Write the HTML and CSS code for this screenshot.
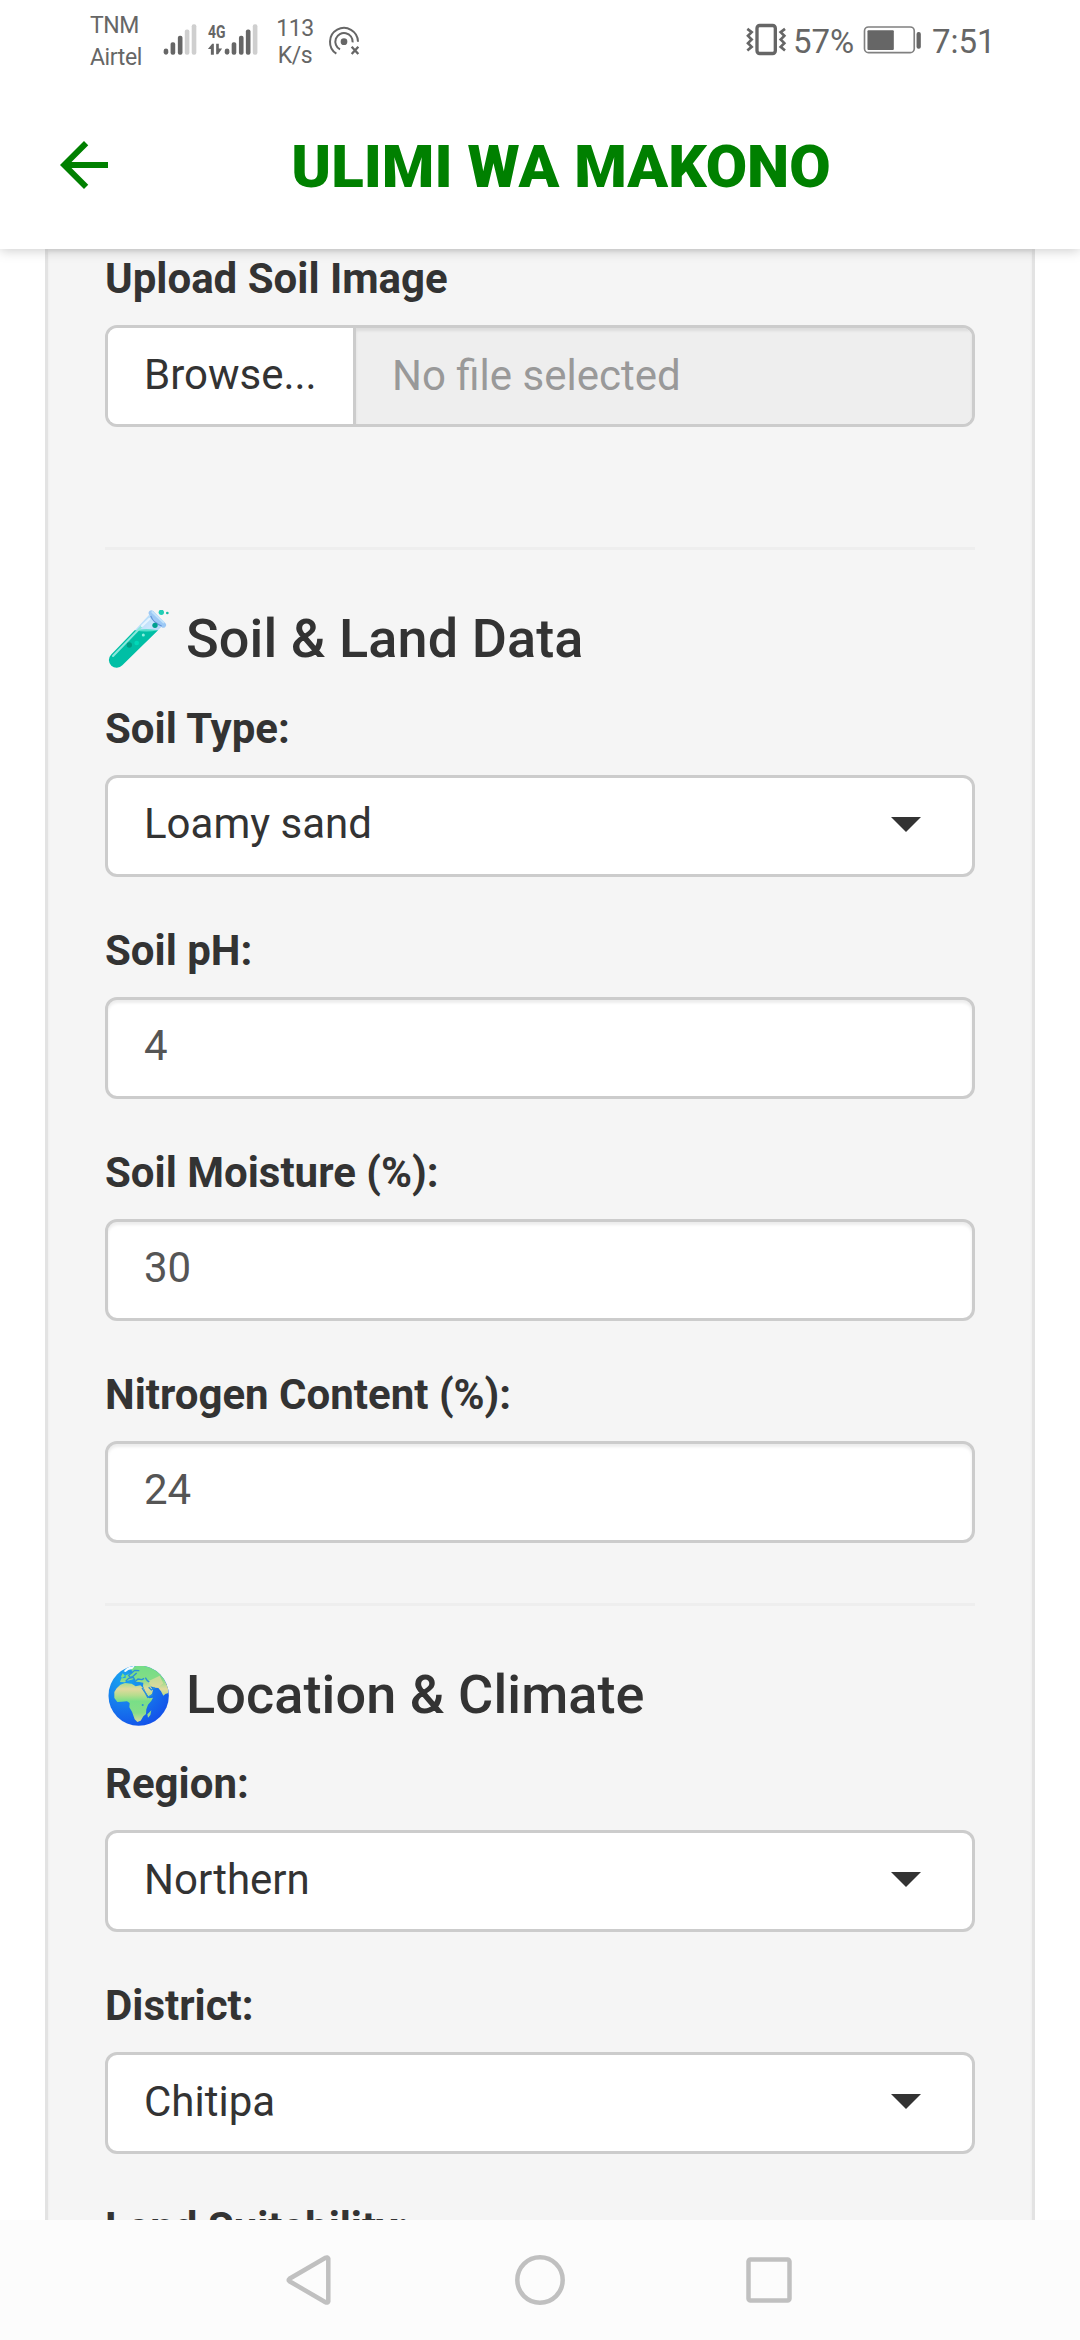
FILE: index.html
```html
<!DOCTYPE html>
<html lang="en">
<head>
<meta charset="utf-8">
<title>Ulimi wa Makono</title>
<link rel="stylesheet" href="styles.css">
</head>
<body>
<div class="screen">
  <div class="status">
    <div class="carriers"><span>TNM</span><span>Airtel</span></div>
    <svg class="signal" viewBox="309 70 101 100" width="34" height="33">
      <g fill="#666"><rect x="310" y="147" width="14" height="19" rx="7"/><rect x="331" y="128" width="14" height="38" rx="6"/><rect x="353" y="109" width="14" height="57" rx="6"/></g>
      <g fill="#cfcfcf"><rect x="374" y="90" width="14" height="76" rx="6"/><rect x="395" y="74" width="14" height="92" rx="6"/></g>
    </svg>
    <svg class="signal-4g" viewBox="441 70 153 100" width="51" height="33">
      <text class="net" x="443" y="115" textLength="53" lengthAdjust="spacingAndGlyphs">4G</text>
      <path fill="#666" d="M443 149l13-16h5v33h-9v-17zM468 133h8v14h10l-12 18h-6z"/>
      <g fill="#666"><rect x="494" y="147" width="14" height="19" rx="7"/><rect x="515" y="128" width="14" height="38" rx="6"/><rect x="537" y="109" width="14" height="57" rx="6"/><rect x="558" y="90" width="14" height="76" rx="6"/></g>
      <rect fill="#cfcfcf" x="579" y="74" width="14" height="92" rx="6"/>
    </svg>
    <div class="speed"><span>113</span><span>K/s</span></div>
    <svg class="hotspot" viewBox="804 74 96 93" width="32" height="31" fill="none" stroke="#666" stroke-width="6">
      <circle cx="852" cy="124" r="10" fill="#666" stroke="none"/>
      <path d="M829 160a42 42 0 1 1 65-36"/>
      <path d="M840 147a26 26 0 1 1 38-21"/>
      <path stroke-width="7" d="M875 139l20 22M895 139l-20 22"/>
    </svg>
    <div class="gap"></div>
    <svg class="vibrate" viewBox="76 70 120 98" width="40" height="33" fill="none" stroke="#666">
      <rect x="109" y="77" width="55" height="84" rx="8" stroke-width="10"/>
      <path stroke-width="8" d="M80 87l13 10-11 11 11 11-11 11 11 11-13 11M193 87l-13 10 11 11-11 11 11 11-11 11 13 11"/>
    </svg>
    <span class="pct">57%</span>
    <svg class="battery" viewBox="428 78 176 85" width="59" height="28">
      <rect x="431" y="81" width="151" height="78" rx="12" fill="none" stroke="#808080" stroke-width="5"/>
      <rect x="440" y="91" width="80" height="60" rx="3" fill="#666"/>
      <rect x="589" y="96" width="13" height="51" rx="6" fill="#666"/>
    </svg>
    <span class="clock">7:51</span>
  </div>
  <header class="appbar">
    <svg class="back" viewBox="0 0 24 24" width="72" height="72"><path fill="#008000" d="M20 11H7.83l5.59-5.59L12 4l-8 8 8 8 1.41-1.41L7.83 13H20v-2z"/></svg>
    <h1>ULIMI WA MAKONO</h1>
  </header>
  <main>
    <form class="well">
      <div class="group file-group">
        <label>Upload Soil Image</label>
        <div class="file"><span class="browse">Browse...</span><span class="filename">No file selected</span></div>
      </div>
      <hr>
      <h4>
        <svg viewBox="15 30 201 180" width="67" height="60">
          <defs>
            <linearGradient id="glass" x1="0" y1="0" x2="1" y2="1"><stop offset="0" stop-color="#a5d5f7"/><stop offset=".5" stop-color="#cce6fd"/><stop offset="1" stop-color="#94bff0"/></linearGradient>
          </defs>
          <path fill="url(#glass)" d="M149 43L106 89 138 126 186 79z"/>
          <path fill="#00bfa5" d="M104 91Q140 87 174 91L67 196A23 23 0 0 1 33 164z"/>
          <path fill="#52dfca" d="M104 91Q140 85 174 91Q139 98 104 91z"/>
          <path d="M154 39L190 75" stroke="#9cc8f5" stroke-width="16" stroke-linecap="round"/>
          <path d="M152 48Q160 68 185 78" stroke="#6594da" stroke-width="4" fill="none"/>
          <path d="M157 36L190 67" stroke="#c2e2fb" stroke-width="6" stroke-linecap="round"/>
          <path d="M39 168L126 78" stroke="#8ce8dc" stroke-width="6" stroke-linecap="round"/>
          <path d="M126 78L148 57" stroke="#e5f4ff" stroke-width="7" stroke-linecap="round"/>
          <circle cx="165" cy="76" r="8" fill="#009f90"/><circle cx="88" cy="135" r="8" fill="#009b83"/>
          <circle cx="110" cy="129" r="7" fill="#00d8b8"/><circle cx="130" cy="105" r="4.500" fill="#8cf0df"/>
          <circle cx="184" cy="37" r="8" fill="#20ceb5"/><circle cx="202" cy="39" r="4" fill="#17b9a4"/>
        </svg>
        <span>Soil &amp; Land Data</span>
      </h4>
      <div class="group"><label>Soil Type:</label><div class="control select">Loamy sand<i class="caret"></i></div></div>
      <div class="group"><label>Soil pH:</label><div class="control input">4</div></div>
      <div class="group"><label>Soil Moisture (%):</label><div class="control input">30</div></div>
      <div class="group"><label>Nitrogen Content (%):</label><div class="control input">24</div></div>
      <hr>
      <h4>
        <svg viewBox="15 30 201 180" width="67" height="60">
          <defs>
            <radialGradient id="sea" gradientUnits="userSpaceOnUse" cx="75" cy="65" r="155"><stop offset="0" stop-color="#18a5f0"/><stop offset=".4" stop-color="#1787ee"/><stop offset="1" stop-color="#1353ea"/></radialGradient>
            <linearGradient id="land" gradientUnits="userSpaceOnUse" x1="110" y1="35" x2="110" y2="195"><stop offset="0" stop-color="#76dd86"/><stop offset=".22" stop-color="#83dd86"/><stop offset=".4" stop-color="#e2d99e"/><stop offset=".52" stop-color="#b5dd8d"/><stop offset=".63" stop-color="#79df87"/><stop offset=".85" stop-color="#86dd88"/><stop offset="1" stop-color="#d1d99b"/></linearGradient>
            <clipPath id="disc"><circle cx="116" cy="119" r="90.500"/></clipPath>
          </defs>
          <g clip-path="url(#disc)">
            <rect x="20" y="25" width="195" height="190" fill="url(#sea)"/>
            <g fill="url(#land)">
              <path d="M61 86L75 81 95 83 107 91 121 88 130 97 140 119 147 127 159 125Q155 136 144 146L139 160 138 174 130 181 122 194 112 198 104 190 96 167 88 154 89 141 81 136 65 137 52 138 43 126 43 108 50 97z"/>
              <path d="M60 78L64 67 77 66 77 58 88 54 98 46 91 39 109 29 160 30 190 63 204 94 205 111 196 114 190 119 183 106 175 96 165 95 151 91 159 102 156 114 146 122 137 109 129 91 130 80 118 78 106 77 103 68 95 71 88 73 79 75 75 79z"/>
              <path d="M154 163L151 177 144 185 142 175 148 169zM63 62l5-10 7 8-9 6z"/>
            </g>
            <path fill="#dfd99e" opacity=".75" d="M151 73L179 59 190 82 175 94 154 90 144 76z"/>
            <g fill="none" stroke="#278fdb" stroke-width="4"><path d="M103 79l11-10 12 2 6-4M136 65l6 9 6 4M77 76l9-9 14-3 5 9M96 50l-10 8 5 7 9-5 10-9M126 96l10 15 7 13 15-8M146 94l8 8 10-7M87 46l9 4 8-7 14 1"/></g>
            <path fill="#f3fbff" d="M71 46L83 34 105 29 98 38 85 42 77 48z"/>
            <circle cx="128" cy="147" r="3" fill="#288ddb"/>
          </g>
        </svg>
        <span>Location &amp; Climate</span>
      </h4>
      <div class="group"><label>Region:</label><div class="control select">Northern<i class="caret"></i></div></div>
      <div class="group"><label>District:</label><div class="control select">Chitipa<i class="caret"></i></div></div>
      <div class="group"><label>Land Suitability:</label></div>
    </form>
  </main>
  <nav>
    <svg viewBox="0 0 50 50" width="50" height="50"><path d="M42.300 3.700V46.300Q41.500 48.300 39.500 47.200L3.500 26.300Q1.800 25 3.500 23.700L39.500 2.800Q41.500 1.700 42.300 3.700z"/></svg>
    <svg viewBox="0 0 50 50" width="50" height="50"><circle cx="25" cy="25" r="22.700"/></svg>
    <svg viewBox="0 0 50 50" width="50" height="50"><rect x="4.500" y="4.500" width="41" height="41" rx="2"/></svg>
  </nav>
</div>
</body>
</html>
```
FILE: styles.css
```css
* { box-sizing: border-box; }
body { margin: 0; background: #fff; font-family: Roboto, sans-serif; font-size: 42px; line-height: 60px; color: #333; }
.screen { width: 1080px; height: 2340px; display: flex; flex-direction: column; overflow: hidden; }

.status { height: 81px; flex: none; display: flex; align-items: flex-start; padding: 0 86px 0 90px; color: #666; background: #fff; position: relative; z-index: 2; }
.status svg { flex: none; display: block; overflow: visible; }
.carriers, .speed { display: flex; flex-direction: column; font-size: 23px; letter-spacing: -.4px; }
.carriers { width: 73px; padding-top: 10px; line-height: 31.500px; }
.signal { margin-top: 23px; }
.signal-4g { margin: 23px 0 0 10px; }
.net { font: 700 56px Roboto, sans-serif; fill: #666; }
.speed { width: 50px; margin-left: 12px; padding-top: 15px; line-height: 27px; align-items: center; text-align: center; }
.hotspot { margin: 25px 0 0 8px; }
.gap { flex: 1; }
.vibrate { margin: 23px 7px 0 0; }
.pct, .clock { font-size: 33px; line-height: 40px; margin-top: 22px; white-space: nowrap; }
.pct { width: 62px; }
.battery { margin: 26px 10px 0 8px; }
.clock { width: 62px; }

.appbar { height: 168px; flex: none; display: flex; align-items: center; background: #fff; position: relative; z-index: 1; box-shadow: 0 1px 12px rgba(0,0,0,.22); padding: 0 48px; }
.back { display: block; flex: none; }
h1 { flex: 1; margin: 0 30px 0 0; padding-top: 4px; text-align: center; font-size: 60px; line-height: 72px; font-weight: 900; color: #008000; white-space: nowrap; }

main { flex: 1; min-height: 0; overflow: hidden; padding: 0 45px; }
.well { margin: 0; height: 100%; padding: 1px 57px 0; background: #f5f5f5; border: solid #e3e3e3; border-width: 0 3px; box-shadow: inset 0 3px 3px rgba(0,0,0,.05); }
.group { margin-bottom: 45px; }
.file-group { margin-bottom: 120px; }
label { display: block; line-height: 57px; margin-bottom: 18px; font-weight: 700; }
hr { border: 0; border-top: 3px solid #eee; margin: 60px 0; }
h4 { display: flex; align-items: flex-start; gap: 14px; height: 59.500px; margin: 0 0 30px; font-size: 54px; line-height: 57px; letter-spacing: .1px; font-weight: 500; white-space: nowrap; }
h4 svg { flex: none; display: block; }
.control { height: 102px; display: flex; align-items: center; justify-content: space-between; padding: 0 51px 3px 36px; border: 3px solid #ccc; border-radius: 12px; background: #fff; }
.input { color: #555; box-shadow: inset 0 3px 3px rgba(0,0,0,.075); }
.caret { border: 15px solid transparent; border-top-color: #333; border-bottom: 0; }
.file { height: 102px; display: flex; line-height: 93px; border: 3px solid #ccc; border-radius: 12px; overflow: hidden; }
.browse { width: 248px; padding-left: 36px; background: #fff; border-right: 3px solid #ccc; }
.filename { flex: 1; padding-left: 36px; line-height: 95px; background: #eee; color: #999; box-shadow: inset 0 3px 3px rgba(0,0,0,.075); }

nav { height: 120px; flex: none; display: flex; justify-content: center; align-items: center; gap: 179px; background: #fcfcfc; }
nav svg { display: block; fill: none; stroke: #c0c0c0; stroke-width: 4.500; overflow: visible; }
```
